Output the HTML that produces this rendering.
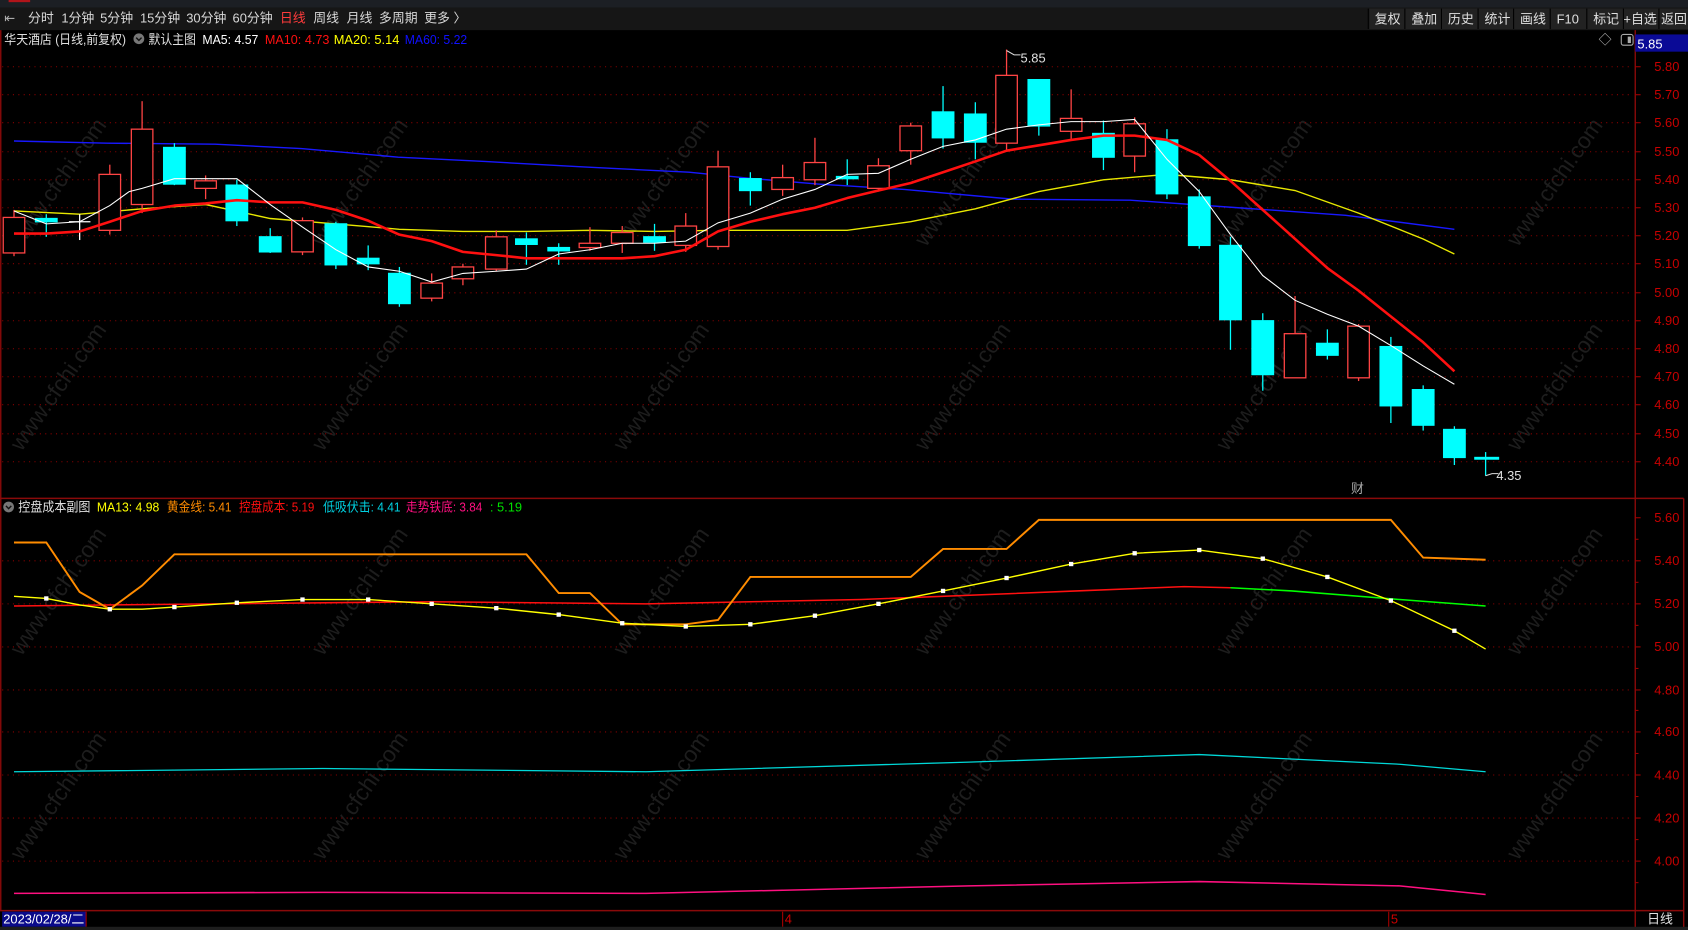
<!DOCTYPE html>
<html><head><meta charset="utf-8"><style>
html,body{margin:0;padding:0;background:#000;overflow:hidden}
svg{display:block}
text{font-family:"Liberation Sans","Noto Sans CJK SC",sans-serif}
</style></head><body>
<svg width="1688" height="930" viewBox="0 0 1568 864" preserveAspectRatio="none" xmlns="http://www.w3.org/2000/svg">
<rect width="1568" height="864" fill="#000"/>
<!-- top strip -->
<rect x="0" y="0" width="1568" height="7" fill="#1c1f24"/>
<rect x="8" y="0" width="20" height="2" fill="#b0141a"/>
<rect x="0" y="7" width="1568" height="21" fill="#161616"/>
<g font-size="12" fill="#d8d8d8">
<text x="4" y="21" fill="#aaa">⇤</text>
<text x="26" y="21">分时</text><text x="57" y="21">1分钟</text><text x="93" y="21">5分钟</text>
<text x="130" y="21">15分钟</text><text x="173" y="21">30分钟</text><text x="216" y="21">60分钟</text>
<text x="260" y="21" fill="#ff3b3b">日线</text><text x="291" y="21">周线</text><text x="322" y="21">月线</text>
<text x="352" y="21">多周期</text><text x="394" y="21">更多 〉</text>
</g>
<g fill="#222"><rect x="1371" y="8" width="197" height="19"/><rect x="1272" y="8" width="100" height="19"/></g>
<g stroke="#000" stroke-width="1">
<line x1="1271" y1="8" x2="1271" y2="27"/><line x1="1305" y1="8" x2="1305" y2="27"/><line x1="1339" y1="8" x2="1339" y2="27"/>
<line x1="1373" y1="8" x2="1373" y2="27"/><line x1="1406" y1="8" x2="1406" y2="27"/><line x1="1440" y1="8" x2="1440" y2="27"/>
<line x1="1474" y1="8" x2="1474" y2="27"/><line x1="1508" y1="8" x2="1508" y2="27"/><line x1="1541" y1="8" x2="1541" y2="27"/>
</g>
<g font-size="12" fill="#e0e0e0">
<text x="1277" y="22">复权</text><text x="1311" y="22">叠加</text><text x="1345" y="22">历史</text><text x="1379" y="22">统计</text>
<text x="1412" y="22">画线</text><text x="1446" y="22">F10</text><text x="1480" y="22">标记</text><text x="1508" y="22">+自选</text><text x="1543" y="22">返回</text>
</g>
<!-- watermarks -->
<g font-size="21" fill="#1d1d1d">
<text transform="translate(20,230) rotate(-55)">www.cfchi.com</text>
<text transform="translate(300,230) rotate(-55)">www.cfchi.com</text>
<text transform="translate(580,230) rotate(-55)">www.cfchi.com</text>
<text transform="translate(860,230) rotate(-55)">www.cfchi.com</text>
<text transform="translate(1140,230) rotate(-55)">www.cfchi.com</text>
<text transform="translate(1410,230) rotate(-55)">www.cfchi.com</text>
<text transform="translate(20,420) rotate(-55)">www.cfchi.com</text>
<text transform="translate(300,420) rotate(-55)">www.cfchi.com</text>
<text transform="translate(580,420) rotate(-55)">www.cfchi.com</text>
<text transform="translate(860,420) rotate(-55)">www.cfchi.com</text>
<text transform="translate(1140,420) rotate(-55)">www.cfchi.com</text>
<text transform="translate(1410,420) rotate(-55)">www.cfchi.com</text>
<text transform="translate(20,610) rotate(-55)">www.cfchi.com</text>
<text transform="translate(300,610) rotate(-55)">www.cfchi.com</text>
<text transform="translate(580,610) rotate(-55)">www.cfchi.com</text>
<text transform="translate(860,610) rotate(-55)">www.cfchi.com</text>
<text transform="translate(1140,610) rotate(-55)">www.cfchi.com</text>
<text transform="translate(1410,610) rotate(-55)">www.cfchi.com</text>
<text transform="translate(20,800) rotate(-55)">www.cfchi.com</text>
<text transform="translate(300,800) rotate(-55)">www.cfchi.com</text>
<text transform="translate(580,800) rotate(-55)">www.cfchi.com</text>
<text transform="translate(860,800) rotate(-55)">www.cfchi.com</text>
<text transform="translate(1140,800) rotate(-55)">www.cfchi.com</text>
<text transform="translate(1410,800) rotate(-55)">www.cfchi.com</text>
</g>
<!-- grids -->
<g stroke="#8a0000" stroke-width="1" stroke-dasharray="1,4">
<line x1="2" y1="62" x2="1517" y2="62"/><line x1="2" y1="88" x2="1517" y2="88"/><line x1="2" y1="114" x2="1517" y2="114"/>
<line x1="2" y1="141" x2="1517" y2="141"/><line x1="2" y1="167" x2="1517" y2="167"/><line x1="2" y1="193" x2="1517" y2="193"/>
<line x1="2" y1="219" x2="1517" y2="219"/><line x1="2" y1="245" x2="1517" y2="245"/><line x1="2" y1="272" x2="1517" y2="272"/>
<line x1="2" y1="298" x2="1517" y2="298"/><line x1="2" y1="324" x2="1517" y2="324"/><line x1="2" y1="350" x2="1517" y2="350"/>
<line x1="2" y1="376" x2="1517" y2="376"/><line x1="2" y1="403" x2="1517" y2="403"/><line x1="2" y1="429" x2="1517" y2="429"/>
<line x1="2" y1="521" x2="1517" y2="521"/><line x1="2" y1="561" x2="1517" y2="561"/><line x1="2" y1="601" x2="1517" y2="601"/>
<line x1="2" y1="641" x2="1517" y2="641"/><line x1="2" y1="680" x2="1517" y2="680"/><line x1="2" y1="720" x2="1517" y2="720"/>
<line x1="2" y1="760" x2="1517" y2="760"/><line x1="2" y1="800" x2="1517" y2="800"/>
</g>
<!-- frame -->
<g stroke="#8a0a0a" stroke-width="1.3" fill="none">
<line x1="0.7" y1="28" x2="0.7" y2="846"/>
<line x1="1519" y1="28" x2="1519" y2="862"/>
<line x1="1564" y1="463" x2="1564" y2="862"/>
<line x1="0" y1="463" x2="1564" y2="463"/>
<line x1="0" y1="846" x2="1564" y2="846"/>
<line x1="1519" y1="862" x2="1564" y2="862"/>
</g>
<!-- axis ticks and labels -->
<g stroke="#a00000" stroke-width="1">
<line x1="1519" y1="62" x2="1524" y2="62"/><line x1="1519" y1="88" x2="1524" y2="88"/><line x1="1519" y1="114" x2="1524" y2="114"/>
<line x1="1519" y1="141" x2="1524" y2="141"/><line x1="1519" y1="167" x2="1524" y2="167"/><line x1="1519" y1="193" x2="1524" y2="193"/>
<line x1="1519" y1="219" x2="1524" y2="219"/><line x1="1519" y1="245" x2="1524" y2="245"/><line x1="1519" y1="272" x2="1524" y2="272"/>
<line x1="1519" y1="298" x2="1524" y2="298"/><line x1="1519" y1="324" x2="1524" y2="324"/><line x1="1519" y1="350" x2="1524" y2="350"/>
<line x1="1519" y1="376" x2="1524" y2="376"/><line x1="1519" y1="403" x2="1524" y2="403"/><line x1="1519" y1="429" x2="1524" y2="429"/>
<line x1="1519" y1="481" x2="1524" y2="481"/><line x1="1519" y1="521" x2="1524" y2="521"/><line x1="1519" y1="561" x2="1524" y2="561"/>
<line x1="1519" y1="601" x2="1524" y2="601"/><line x1="1519" y1="641" x2="1524" y2="641"/><line x1="1519" y1="680" x2="1524" y2="680"/>
<line x1="1519" y1="720" x2="1524" y2="720"/><line x1="1519" y1="760" x2="1524" y2="760"/><line x1="1519" y1="800" x2="1524" y2="800"/>
<line x1="1519" y1="501" x2="1522" y2="501"/><line x1="1519" y1="541" x2="1522" y2="541"/><line x1="1519" y1="581" x2="1522" y2="581"/>
<line x1="1519" y1="621" x2="1522" y2="621"/><line x1="1519" y1="660" x2="1522" y2="660"/><line x1="1519" y1="700" x2="1522" y2="700"/>
<line x1="1519" y1="740" x2="1522" y2="740"/><line x1="1519" y1="780" x2="1522" y2="780"/><line x1="1519" y1="820" x2="1522" y2="820"/>
</g>
<g font-size="12" fill="#c80000" text-anchor="end">
<text x="1560" y="66">5.80</text><text x="1560" y="92">5.70</text><text x="1560" y="118">5.60</text><text x="1560" y="145">5.50</text>
<text x="1560" y="171">5.40</text><text x="1560" y="197">5.30</text><text x="1560" y="223">5.20</text><text x="1560" y="249">5.10</text>
<text x="1560" y="276">5.00</text><text x="1560" y="302">4.90</text><text x="1560" y="328">4.80</text><text x="1560" y="354">4.70</text>
<text x="1560" y="380">4.60</text><text x="1560" y="407">4.50</text><text x="1560" y="433">4.40</text>
<text x="1560" y="485">5.60</text><text x="1560" y="525">5.40</text><text x="1560" y="565">5.20</text><text x="1560" y="605">5.00</text>
<text x="1560" y="645">4.80</text><text x="1560" y="684">4.60</text><text x="1560" y="724">4.40</text><text x="1560" y="764">4.20</text>
<text x="1560" y="804">4.00</text>
</g>
<rect x="1519" y="32" width="49" height="16" fill="#0a0a96"/>
<text x="1521" y="45" font-size="12" fill="#fff">5.85</text>
<text x="1485" y="41" font-size="12" fill="#bbb">◇</text>
<rect x="1506" y="32" width="11" height="10" rx="2" fill="none" stroke="#aaa"/><rect x="1512" y="34" width="3" height="6" fill="#aaa"/>
<!-- main legend -->
<g font-size="12">
<text x="4" y="41" fill="#e0e0e0" textLength="113" lengthAdjust="spacingAndGlyphs">华天酒店 (日线,前复权)</text>
<circle cx="129" cy="36" r="5" fill="#777"/><path d="M126.5 35 L129 37.5 L131.5 35" stroke="#111" stroke-width="1.3" fill="none"/>
<text x="138" y="41" fill="#e0e0e0" textLength="44" lengthAdjust="spacingAndGlyphs">默认主图</text>
<text x="188" y="41" fill="#fff" textLength="52" lengthAdjust="spacingAndGlyphs">MA5: 4.57</text>
<text x="246" y="41" fill="#ff1010" textLength="60" lengthAdjust="spacingAndGlyphs">MA10: 4.73</text>
<text x="310" y="41" fill="#ffff00" textLength="61" lengthAdjust="spacingAndGlyphs">MA20: 5.14</text>
<text x="376" y="41" fill="#1010ff" textLength="58" lengthAdjust="spacingAndGlyphs">MA60: 5.22</text>
</g>
<!-- MA60 -->
<polyline fill="none" stroke="#1818ff" stroke-width="1.3" points="13,131 100,133 200,134 280,138 370,146 450,150 540,155 640,160 700,166 760,171 840,176 940,185 1050,186 1150,193 1250,200 1351,213"/>
<!-- MA20 -->
<polyline fill="none" stroke="#e8e800" stroke-width="1.3" points="13,196 74,199 132,194 191,190 251,203 312,208 371,213 430,215 489,215 548,214 608,215 667,214 727,214 787,214 846,206 906,194 965,178 1025,167 1084,162 1143,167 1203,177 1262,198 1322,222 1351,236"/>
<!-- candles -->
<g stroke-width="1.2">
<g stroke="#ff4444" fill="#000">
<line x1="13" y1="195" x2="13" y2="238"/><rect x="3" y="202" width="20" height="33"/>
<line x1="102" y1="153" x2="102" y2="218"/><rect x="92" y="162" width="20" height="52"/>
<line x1="132" y1="94" x2="132" y2="198"/><rect x="122" y="120" width="20" height="70"/>
<line x1="191" y1="163" x2="191" y2="185"/><rect x="181" y="168" width="20" height="7"/>
<line x1="281" y1="202" x2="281" y2="237"/><rect x="271" y="205" width="20" height="29"/>
<line x1="401" y1="254" x2="401" y2="280"/><rect x="391" y="263" width="20" height="14"/>
<line x1="430" y1="245" x2="430" y2="265"/><rect x="420" y="248" width="20" height="11"/>
<line x1="461" y1="214" x2="461" y2="252"/><rect x="451" y="220" width="20" height="30"/>
<line x1="548" y1="211" x2="548" y2="233"/><rect x="538" y="226" width="20" height="4"/>
<line x1="578" y1="210" x2="578" y2="235"/><rect x="568" y="216" width="20" height="10"/>
<line x1="637" y1="198" x2="637" y2="234"/><rect x="627" y="210" width="20" height="18"/>
<line x1="667" y1="140" x2="667" y2="232"/><rect x="657" y="155" width="20" height="74"/>
<line x1="727" y1="153" x2="727" y2="182"/><rect x="717" y="165" width="20" height="11"/>
<line x1="757" y1="128" x2="757" y2="172"/><rect x="747" y="151" width="20" height="16"/>
<line x1="816" y1="147" x2="816" y2="178"/><rect x="806" y="154" width="20" height="21"/>
<line x1="846" y1="114" x2="846" y2="153"/><rect x="836" y="117" width="20" height="23"/>
<line x1="935" y1="46" x2="935" y2="140"/><rect x="925" y="70" width="20" height="63"/>
<line x1="995" y1="83" x2="995" y2="129"/><rect x="985" y="110" width="20" height="12"/>
<line x1="1054" y1="109" x2="1054" y2="160"/><rect x="1044" y="115" width="20" height="30"/>
<line x1="1203" y1="275" x2="1203" y2="351"/><rect x="1193" y="310" width="20" height="41"/>
<line x1="1262" y1="301" x2="1262" y2="354"/><rect x="1252" y="303" width="20" height="48"/>
</g>
<g stroke="#00ffff" fill="#00ffff">
<line x1="43" y1="199" x2="43" y2="220"/><rect x="33" y="203" width="20" height="3"/>
<line x1="162" y1="133" x2="162" y2="172"/><rect x="152" y="137" width="20" height="34"/>
<line x1="220" y1="167" x2="220" y2="210"/><rect x="210" y="172" width="20" height="33"/>
<line x1="251" y1="212" x2="251" y2="235"/><rect x="241" y="220" width="20" height="14"/>
<line x1="312" y1="206" x2="312" y2="250"/><rect x="302" y="208" width="20" height="38"/>
<line x1="342" y1="228" x2="342" y2="251"/><rect x="332" y="240" width="20" height="5"/>
<line x1="371" y1="248" x2="371" y2="285"/><rect x="361" y="254" width="20" height="28"/>
<line x1="489" y1="216" x2="489" y2="246"/><rect x="479" y="222" width="20" height="5"/>
<line x1="519" y1="226" x2="519" y2="246"/><rect x="509" y="230" width="20" height="3"/>
<line x1="608" y1="208" x2="608" y2="233"/><rect x="598" y="220" width="20" height="5"/>
<line x1="697" y1="160" x2="697" y2="191"/><rect x="687" y="166" width="20" height="11"/>
<line x1="787" y1="148" x2="787" y2="172"/><rect x="777" y="164" width="20" height="2"/>
<line x1="876" y1="80" x2="876" y2="138"/><rect x="866" y="104" width="20" height="24"/>
<line x1="906" y1="95" x2="906" y2="148"/><rect x="896" y="106" width="20" height="26"/>
<line x1="965" y1="74" x2="965" y2="126"/><rect x="955" y="74" width="20" height="43"/>
<line x1="1025" y1="112" x2="1025" y2="158"/><rect x="1015" y="124" width="20" height="22"/>
<line x1="1084" y1="120" x2="1084" y2="185"/><rect x="1074" y="130" width="20" height="50"/>
<line x1="1114" y1="176" x2="1114" y2="231"/><rect x="1104" y="183" width="20" height="45"/>
<line x1="1143" y1="220" x2="1143" y2="325"/><rect x="1133" y="228" width="20" height="69"/>
<line x1="1173" y1="291" x2="1173" y2="363"/><rect x="1163" y="298" width="20" height="50"/>
<line x1="1233" y1="306" x2="1233" y2="334"/><rect x="1223" y="319" width="20" height="11"/>
<line x1="1292" y1="313" x2="1292" y2="393"/><rect x="1282" y="322" width="20" height="55"/>
<line x1="1322" y1="358" x2="1322" y2="400"/><rect x="1312" y="362" width="20" height="33"/>
<line x1="1351" y1="396" x2="1351" y2="432"/><rect x="1341" y="399" width="20" height="26"/>
<line x1="1380" y1="420" x2="1380" y2="442"/><rect x="1370" y="425" width="22" height="1.5"/>
</g>
<g stroke="#fff"><line x1="74" y1="199" x2="74" y2="223"/><line x1="64" y1="206" x2="84" y2="206"/></g>
</g>
<!-- MA10 -->
<polyline fill="none" stroke="#ff1010" stroke-width="2.4" stroke-linejoin="round" points="13,217 43,217 74,215 102,206 132,196 162,191 191,189 220,186 251,188 281,188 312,195 342,205 371,218 401,224 430,234 461,237 489,240 519,240 548,240 578,240 608,238 637,232 667,215 697,206 727,199 757,193 787,184 816,177 846,170 876,160 906,150 935,140 965,135 995,130 1025,126 1054,126 1084,130 1114,144 1143,168 1173,195 1203,222 1233,249 1262,270 1292,294 1322,318 1351,345"/>
<!-- MA5 -->
<polyline fill="none" stroke="#fff" stroke-width="1" points="13,196 43,208 74,206 102,191 120,178 132,175 162,166 191,166 220,166 251,190 281,211 312,232 342,248 371,252 401,262 430,254 461,252 489,250 519,236 548,232 578,226 608,226 637,224 667,207 697,198 727,185 757,176 787,162 816,161 846,148 876,136 906,130 935,120 965,116 995,113 1025,113 1054,111 1084,148 1114,178 1143,218 1173,256 1203,279 1233,292 1262,303 1292,321 1322,340 1351,357"/>
<!-- markers -->
<g font-size="12" fill="#e0e0e0">
<path d="M935 47 L942 51 L948 51" stroke="#ddd" fill="none"/><text x="948" y="58">5.85</text>
<path d="M1380 442 L1386 440 L1392 440" stroke="#ddd" fill="none"/><text x="1390" y="446">4.35</text>
<text x="1255" y="458" fill="#aaa">财</text>
</g>
<!-- sub legend -->
<g font-size="12">
<circle cx="8" cy="471" r="5" fill="#777"/><path d="M5.5 470 L8 472.5 L10.5 470" stroke="#111" stroke-width="1.3" fill="none"/>
<text x="17" y="475" fill="#e0e0e0" textLength="67" lengthAdjust="spacingAndGlyphs">控盘成本副图</text>
<text x="90" y="475" fill="#ffff00" textLength="58" lengthAdjust="spacingAndGlyphs">MA13: 4.98</text>
<text x="155" y="475" fill="#ff8c00" textLength="60" lengthAdjust="spacingAndGlyphs">黄金线: 5.41</text>
<text x="222" y="475" fill="#ff1010" textLength="70" lengthAdjust="spacingAndGlyphs">控盘成本: 5.19</text>
<text x="300" y="475" fill="#00d0e0" textLength="72" lengthAdjust="spacingAndGlyphs">低吸伏击: 4.41</text>
<text x="377" y="475" fill="#ff1080" textLength="71" lengthAdjust="spacingAndGlyphs">走势铁底: 3.84</text>
<text x="455" y="475" fill="#00e000" textLength="30" lengthAdjust="spacingAndGlyphs">: 5.19</text>
</g>
<!-- sub lines -->
<polyline fill="none" stroke="#00d8d8" stroke-width="1.2" points="13,717 300,714 600,717 900,708 1114,701 1300,710 1380,717"/>
<polyline fill="none" stroke="#ff1080" stroke-width="1.4" points="13,830 300,829 600,830 900,823 1114,819 1300,823 1380,831"/>
<polyline fill="none" stroke="#ff1010" stroke-width="1.4" points="13,563 200,561 400,559 600,561 800,557 1000,549 1100,545 1143,546"/>
<polyline fill="none" stroke="#00ff00" stroke-width="1.4" points="1143,546 1200,549 1300,557 1380,563"/>
<polyline fill="none" stroke="#ff8c00" stroke-width="1.8" points="13,504 43,504 74,550 102,566 132,544 162,515 191,515 489,515 519,551 548,551 578,580 637,580 667,576 697,536 846,536 876,510 935,510 965,483 1292,483 1322,518 1380,520"/>
<polyline fill="none" stroke="#ffff00" stroke-width="1.3" points="13,554 43,556 74,562 102,566 132,566 162,564 220,560 281,557 342,557 401,561 461,565 519,571 578,579 637,582 697,580 757,572 816,561 876,549 935,537 995,524 1054,514 1114,511 1173,519 1233,536 1292,558 1351,586 1380,603"/>
<g fill="#fff">
<rect x="41" y="554" width="4" height="4"/><rect x="100" y="564" width="4" height="4"/><rect x="160" y="562" width="4" height="4"/>
<rect x="218" y="558" width="4" height="4"/><rect x="279" y="555" width="4" height="4"/><rect x="340" y="555" width="4" height="4"/>
<rect x="399" y="559" width="4" height="4"/><rect x="459" y="563" width="4" height="4"/><rect x="517" y="569" width="4" height="4"/>
<rect x="576" y="577" width="4" height="4"/><rect x="635" y="580" width="4" height="4"/><rect x="695" y="578" width="4" height="4"/>
<rect x="755" y="570" width="4" height="4"/><rect x="814" y="559" width="4" height="4"/><rect x="874" y="547" width="4" height="4"/>
<rect x="933" y="535" width="4" height="4"/><rect x="993" y="522" width="4" height="4"/><rect x="1052" y="512" width="4" height="4"/>
<rect x="1112" y="509" width="4" height="4"/><rect x="1171" y="517" width="4" height="4"/><rect x="1231" y="534" width="4" height="4"/>
<rect x="1290" y="556" width="4" height="4"/><rect x="1349" y="584" width="4" height="4"/>
</g>
<!-- time axis -->
<rect x="2" y="847" width="78" height="14" fill="#0a0a8a"/>
<line x1="80" y1="847" x2="80" y2="861" stroke="#a00" />
<text x="3" y="858" font-size="12" fill="#fff">2023/02/28/二</text>
<line x1="727" y1="847" x2="727" y2="861" stroke="#a00"/><text x="729" y="858" font-size="12" fill="#c00">4</text>
<line x1="1290" y1="847" x2="1290" y2="861" stroke="#a00"/><text x="1292" y="858" font-size="12" fill="#c00">5</text>
<text x="1530" y="858" font-size="12" fill="#e0e0e0">日线</text>
<rect x="0" y="861" width="1568" height="3" fill="#1e1e1e"/>
</svg>
</body></html>
